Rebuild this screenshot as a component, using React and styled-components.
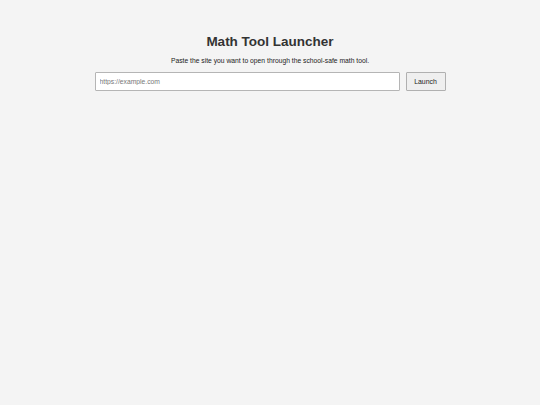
import React from "react";
import styled, { createGlobalStyle } from "styled-components";

const GlobalStyle = createGlobalStyle`
  html, body {
    margin: 0;
    padding: 0;
    background: #f4f4f4;
    font-family: "Liberation Sans", Arial, sans-serif;
  }
`;

const Page = styled.main`
  min-height: 405px;
  padding-top: 34px;
  box-sizing: border-box;
`;

const Wrapper = styled.div`
  width: 351px;
  margin: 0 auto;
  display: flex;
  flex-direction: column;
  align-items: center;
`;

const Title = styled.h1`
  margin: 0;
  font-size: 13.5px;
  line-height: 16px;
  font-weight: bold;
  color: #333;
`;

const Subtitle = styled.p`
  margin: 7px 0 0;
  font-size: 6.75px;
  line-height: 8px;
  color: #222;
`;

const Row = styled.form`
  margin-top: 7px;
  width: 100%;
  display: flex;
  gap: 6px;
`;

const UrlInput = styled.input`
  flex: 1;
  height: 19px;
  box-sizing: border-box;
  padding: 0 4px;
  border: 1px solid #b5b5b5;
  border-radius: 1px;
  background: #fff;
  font-family: inherit;
  font-size: 6.75px;
  color: #222;
  outline: none;

  &::placeholder {
    color: #777;
  }
`;

const Button = styled.button`
  width: 40px;
  height: 19px;
  box-sizing: border-box;
  padding: 0;
  border: 1px solid #b0b0b0;
  border-radius: 1px;
  background: #efefef;
  font-family: inherit;
  font-size: 6.9px;
  color: #222;
  cursor: pointer;
`;

export default function App() {
  return (
    <>
      <GlobalStyle />
      <Page>
        <Wrapper>
          <Title>Math Tool Launcher</Title>
          <Subtitle>Paste the site you want to open through the school-safe math tool.</Subtitle>
          <Row onSubmit={(e) => e.preventDefault()}>
            <UrlInput type="url" placeholder="https://example.com" />
            <Button type="submit">Launch</Button>
          </Row>
        </Wrapper>
      </Page>
    </>
  );
}
